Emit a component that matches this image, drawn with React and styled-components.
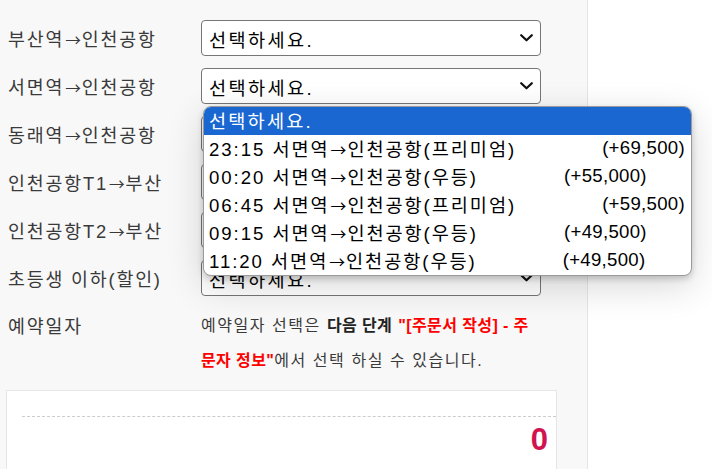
import styled, { createGlobalStyle } from "styled-components";

const routes = [
  ["부산역", "인천공항"],
  ["서면역", "인천공항"],
  ["동래역", "인천공항"],
  ["인천공항T1", "부산"],
  ["인천공항T2", "부산"],
];

const options = [
  { time: "23:15", from: "서면역", to: "인천공항(프리미엄)", price: "(+69,500)" },
  { time: "00:20", from: "서면역", to: "인천공항(우등)", price: "(+55,000)" },
  { time: "06:45", from: "서면역", to: "인천공항(프리미엄)", price: "(+59,500)" },
  { time: "09:15", from: "서면역", to: "인천공항(우등)", price: "(+49,500)" },
  { time: "11:20", from: "서면역", to: "인천공항(우등)", price: "(+49,500)" },
];

const Chevron = () => (
  <svg width="13" height="8" viewBox="0 0 13 8">
    <polyline
      points="1.2,1.2 6.5,6.3 11.8,1.2"
      fill="none"
      stroke="#111"
      strokeWidth="2.2"
      strokeLinecap="round"
      strokeLinejoin="round"
    />
  </svg>
);

const SelectBox = ({ open }) => (
  <Field>
    <Select>
      <span>선택하세요.</span>
      <Chevron />
    </Select>
    {open && (
      <Dropdown>
        <Option selected>선택하세요.</Option>
        {options.map((opt) => (
          <Option key={opt.time}>
            <span>
              {opt.time} {opt.from}
              <Arrow>→</Arrow>
              {opt.to}
            </span>
            <Price>{opt.price}</Price>
          </Option>
        ))}
      </Dropdown>
    )}
  </Field>
);

const App = () => {
  return (
    <>
      <GlobalStyle />
      <Page>
        <Panel>
          <Form>
            {routes.map(([from, to], i) => (
              <Row key={from + to}>
                <Label>
                  {from}
                  <Arrow>→</Arrow>
                  {to}
                </Label>
                <SelectBox open={i === 1} />
              </Row>
            ))}
            <Row>
              <Label>초등생 이하(할인)</Label>
              <SelectBox />
            </Row>
            <Row top>
              <Label tall>예약일자</Label>
              <Notice>
                예약일자 선택은 <strong>다음 단계</strong>{" "}
                <Red>"[주문서 작성] - 주문자 정보"</Red>에서 선택 하실 수
                있습니다.
              </Notice>
            </Row>
          </Form>

          <Summary>
            <Divider />
            <Total>0</Total>
          </Summary>
        </Panel>
      </Page>
    </>
  );
};

const GlobalStyle = createGlobalStyle`
  html, body {
    margin: 0;
    background: #fff;
  }

  body {
    font-family: "Liberation Sans", "Noto Sans CJK KR", sans-serif;
    color: #333;
  }
`;

const Page = styled.div`
  display: flex;
  height: 469px;
  overflow: hidden;
`;

const Panel = styled.main`
  width: 588px;
  box-sizing: border-box;
  background: #f8f8f8;
  border-right: 1px solid #e6e6e6;
  padding: 20px 30px 0 6px;
  display: flex;
  flex-direction: column;
`;

const Form = styled.div`
  display: flex;
  flex-direction: column;
  gap: 12px;
  padding-left: 2px;
`;

const Row = styled.div`
  display: grid;
  grid-template-columns: 193px 340px;
  align-items: ${({ top }) => (top ? "start" : "center")};
`;

const Arrow = styled.span`
  font-family: "Noto Sans CJK KR", sans-serif;
  font-size: 0.85em;
  letter-spacing: 0;
  margin: 0 1px;
`;

const Label = styled.div`
  font-size: 18.4px;
  line-height: ${({ tall }) => (tall ? "35px" : "24px")};
  letter-spacing: 1.8px;
  color: #3a3a3a;
  white-space: nowrap;
  padding-top: ${({ tall }) => (tall ? "1px" : "3px")};
`;

const Field = styled.div`
  position: relative;
`;

const Select = styled.div`
  height: 36px;
  box-sizing: border-box;
  background: #fff;
  border: 1px solid #767676;
  border-radius: 4px;
  padding: 0 7px 0 7px;
  display: flex;
  align-items: center;
  justify-content: space-between;
  font-size: 18.6px;
  letter-spacing: 2.4px;
  color: #000;
`;

const Dropdown = styled.div`
  position: absolute;
  top: calc(100% + 2px);
  left: 2px;
  z-index: 10;
  width: 489px;
  box-sizing: border-box;
  background: #fff;
  border: 1px solid #9a9a9a;
  border-radius: 8px;
  overflow: hidden;
  box-shadow: 0 3px 6px rgba(0, 0, 0, 0.18), 0 10px 36px rgba(0, 0, 0, 0.16);
`;

const Option = styled.div`
  height: 28px;
  box-sizing: border-box;
  display: flex;
  align-items: center;
  gap: 86px;
  padding: 0 5px 3px;
  font-size: 18.6px;
  letter-spacing: ${({ selected }) => (selected ? "2.2px" : "1.95px")};
  white-space: pre;
  color: ${({ selected }) => (selected ? "#fff" : "#000")};
  background: ${({ selected }) => (selected ? "#1a67d2" : "transparent")};
`;

const Price = styled.span`
  flex-shrink: 0;
  letter-spacing: 0.3px;
`;

const Notice = styled.p`
  margin: 0;
  font-size: 16px;
  line-height: 35px;
  letter-spacing: 1.55px;
  color: #3a3a3a;

  strong {
    color: #222;
    letter-spacing: 0.4px;
  }
`;

const Red = styled.strong`
  color: #f00 !important;
`;

const Summary = styled.section`
  margin-top: 12px;
  width: 551px;
  flex: 1;
  box-sizing: border-box;
  background: #fff;
  border: 1px solid #e6e6e6;
  border-bottom: none;
  padding: 25px 0 0 15px;
`;

const Divider = styled.div`
  border-top: 1px dashed #cccccc;
`;

const Total = styled.div`
  padding: 6px 8px 0 0;
  text-align: right;
  font-size: 31px;
  line-height: 34px;
  font-weight: 700;
  color: #d1134f;
`;

export default App;
